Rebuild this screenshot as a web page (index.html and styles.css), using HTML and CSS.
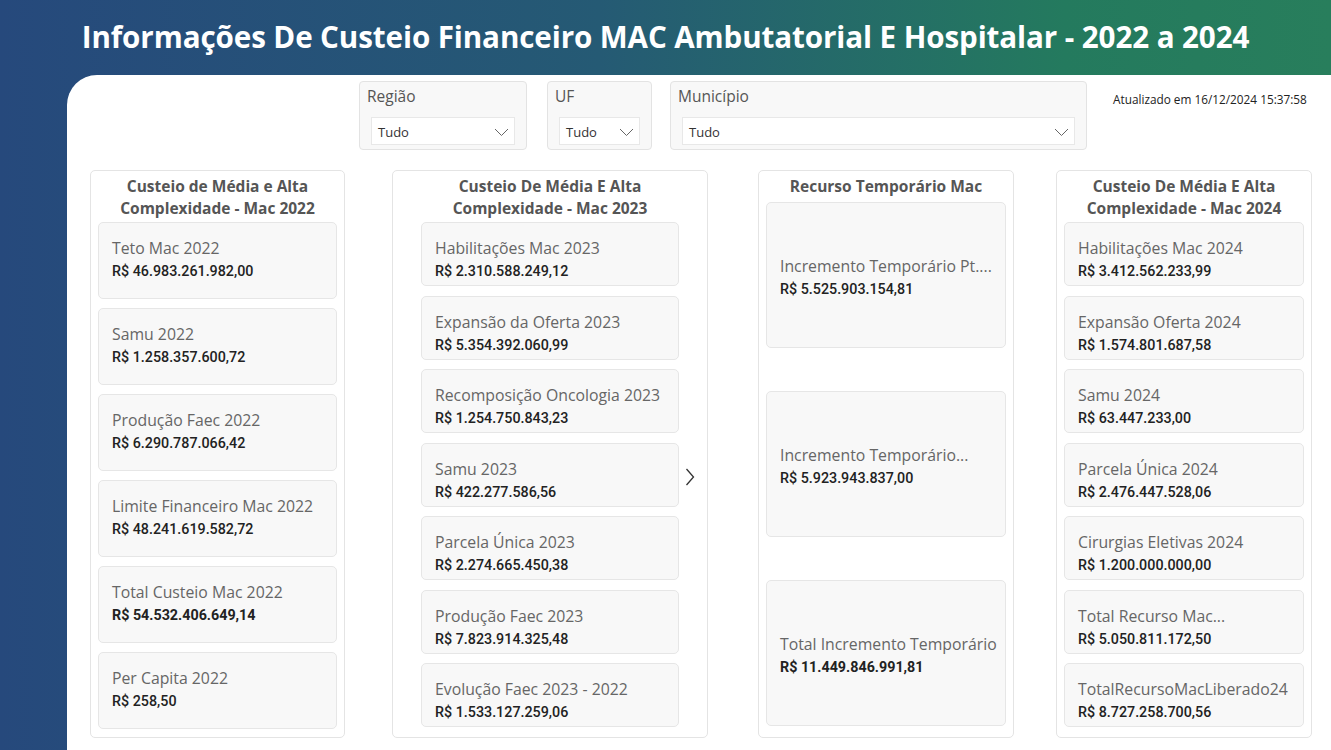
FILE: index.html
```html
<!DOCTYPE html>
<html lang="pt-BR">
<head>
  <meta charset="UTF-8">
  <title>Custeio Financeiro MAC</title>
  <link rel="stylesheet" href="styles.css">
</head>
<body>
  <header class="top">
    <h1>Informações De Custeio Financeiro MAC Ambutatorial E Hospitalar - 2022 a 2024</h1>
  </header>
  <main class="panel">
    <div class="filters">
      <div class="slicer regiao">
        <span class="slicer-title">Região</span>
        <div class="dropdown">Tudo
          <svg width="15" height="9" viewBox="0 0 15 9"><path d="M1 1l6.5 6.5L14 1" fill="none" stroke="#666" stroke-width="1"/></svg>
        </div>
      </div>
      <div class="slicer uf">
        <span class="slicer-title">UF</span>
        <div class="dropdown">Tudo
          <svg width="15" height="9" viewBox="0 0 15 9"><path d="M1 1l6.5 6.5L14 1" fill="none" stroke="#666" stroke-width="1"/></svg>
        </div>
      </div>
      <div class="slicer municipio">
        <span class="slicer-title">Município</span>
        <div class="dropdown">Tudo
          <svg width="15" height="9" viewBox="0 0 15 9"><path d="M1 1l6.5 6.5L14 1" fill="none" stroke="#666" stroke-width="1"/></svg>
        </div>
      </div>
      <div class="updated">Atualizado em 16/12/2024 15:37:58</div>
    </div>

    <div class="columns">
      <section class="col col-2022">
        <h2>Custeio de Média e Alta<br>Complexidade - Mac 2022</h2>
        <div class="card"><span class="label">Teto Mac 2022</span><span class="value">R$ 46.983.261.982,00</span></div>
        <div class="card"><span class="label">Samu 2022</span><span class="value">R$ 1.258.357.600,72</span></div>
        <div class="card"><span class="label">Produção Faec 2022</span><span class="value">R$ 6.290.787.066,42</span></div>
        <div class="card"><span class="label">Limite Financeiro Mac 2022</span><span class="value">R$ 48.241.619.582,72</span></div>
        <div class="card"><span class="label">Total Custeio Mac 2022</span><span class="value strong">R$ 54.532.406.649,14</span></div>
        <div class="card"><span class="label">Per Capita 2022</span><span class="value">R$ 258,50</span></div>
      </section>

      <section class="col col-2023">
        <h2>Custeio De Média E Alta<br>Complexidade - Mac 2023</h2>
        <div class="card"><span class="label">Habilitações Mac 2023</span><span class="value">R$ 2.310.588.249,12</span></div>
        <div class="card"><span class="label">Expansão da Oferta 2023</span><span class="value">R$ 5.354.392.060,99</span></div>
        <div class="card"><span class="label">Recomposição Oncologia 2023</span><span class="value">R$ 1.254.750.843,23</span></div>
        <div class="card"><span class="label">Samu 2023</span><span class="value">R$ 422.277.586,56</span></div>
        <div class="card"><span class="label">Parcela Única 2023</span><span class="value">R$ 2.274.665.450,38</span></div>
        <div class="card"><span class="label">Produção Faec 2023</span><span class="value">R$ 7.823.914.325,48</span></div>
        <div class="card"><span class="label">Evolução Faec 2023 - 2022</span><span class="value">R$ 1.533.127.259,06</span></div>
        <svg class="next" width="10" height="18" viewBox="0 0 10 18"><path d="M1.5 1l7 8-7 8" fill="none" stroke="#333" stroke-width="1.3"/></svg>
      </section>

      <section class="col col-temp">
        <h2>Recurso Temporário Mac</h2>
        <div class="card"><span class="label">Incremento Temporário Pt....</span><span class="value">R$ 5.525.903.154,81</span></div>
        <div class="card"><span class="label">Incremento Temporário...</span><span class="value">R$ 5.923.943.837,00</span></div>
        <div class="card"><span class="label">Total Incremento Temporário</span><span class="value strong">R$ 11.449.846.991,81</span></div>
      </section>

      <section class="col col-2024">
        <h2>Custeio De Média E Alta<br>Complexidade - Mac 2024</h2>
        <div class="card"><span class="label">Habilitações Mac 2024</span><span class="value">R$ 3.412.562.233,99</span></div>
        <div class="card"><span class="label">Expansão Oferta 2024</span><span class="value">R$ 1.574.801.687,58</span></div>
        <div class="card"><span class="label">Samu 2024</span><span class="value">R$ 63.447.233,00</span></div>
        <div class="card"><span class="label">Parcela Única 2024</span><span class="value">R$ 2.476.447.528,06</span></div>
        <div class="card"><span class="label">Cirurgias Eletivas 2024</span><span class="value">R$ 1.200.000.000,00</span></div>
        <div class="card"><span class="label">Total Recurso Mac...</span><span class="value">R$ 5.050.811.172,50</span></div>
        <div class="card"><span class="label">TotalRecursoMacLiberado24</span><span class="value">R$ 8.727.258.700,56</span></div>
      </section>
    </div>
  </main>
</body>
</html>
```

FILE: styles.css
```css
body {
  margin: 0;
  padding: 0;
  height: 750px;
  overflow: hidden;
  font-family: "Open Sans", "Noto Sans", sans-serif;
  background: linear-gradient(90deg, #26497c 0%, #255a74 45%, #247a5e 80%, #287e5c 100%);
}
.top {
  height: 75px;
  display: flex;
  align-items: center;
  justify-content: center;
}
.top h1 {
  margin: 0;
  padding-bottom: 2px;
  color: white;
  font-size: 29.6px;
  font-weight: 700;
  letter-spacing: -0.1px;
}
.panel {
  margin-left: 67px;
  height: 675px;
  background: white;
  border-top-left-radius: 30px;
}

/* filtros */
.filters {
  display: flex;
  align-items: flex-start;
  padding: 6px 0 0 292px;
}
.slicer {
  height: 69px;
  box-sizing: border-box;
  border: 1px solid #e3e3e3;
  border-radius: 4px;
  background: #f8f8f8;
  padding: 3px 11px 0 11px;
}
.regiao { width: 168px; }
.uf { width: 105px; margin-left: 20px; }
.municipio { width: 417px; margin-left: 18px; }
.slicer-title {
  display: block;
  margin-left: -4px;
  font-size: 15.5px;
  color: #555;
  height: 32px;
}
.dropdown {
  height: 28px;
  box-sizing: border-box;
  background: white;
  border: 1px solid #e8e8e8;
  display: flex;
  align-items: center;
  justify-content: space-between;
  padding: 2px 5px 0 6px;
  font-size: 13px;
  color: #333;
}
.updated {
  margin: 10px 0 0 26px;
  font-size: 11.8px;
  color: #222;
}

/* colunas */
.columns {
  display: flex;
  align-items: flex-start;
  padding: 20px 0 0 23px;
}
.col {
  position: relative;
  height: 568px;
  box-sizing: border-box;
  border: 1px solid #e4e4e4;
  border-radius: 5px;
  display: flex;
  flex-direction: column;
}
.col h2 {
  margin: 0;
  text-align: center;
  font-size: 15.5px;
  line-height: 22px;
  font-weight: 700;
  color: #555;
}
.col-2022 { width: 255px; padding: 4px 7px 0; }
.col-2023 { width: 316px; padding: 4px 28px 0; margin-left: 47px; }
.col-temp { width: 256px; padding: 4px 7px 0; margin-left: 50px; }
.col-2024 { width: 256px; padding: 4px 7px 0; margin-left: 42px; }

.card {
  flex-shrink: 0;
  box-sizing: border-box;
  background: #f8f8f8;
  border: 1px solid #e6e6e6;
  border-radius: 5px;
  padding: 14px 0 0 13px;
  display: flex;
  flex-direction: column;
  white-space: nowrap;
}
.col-2022 h2 { margin-bottom: 3px; }
.col-2022 .card { height: 77px; margin-bottom: 9px; }
.col-2023 h2, .col-2024 h2 { margin-bottom: 3px; }
.col-2023 .card, .col-2024 .card { height: 64px; margin-bottom: 9.5px; }
.col-temp h2 { margin-bottom: 5px; }
.col-temp .card {
  height: 146px;
  margin-bottom: 43px;
  justify-content: center;
  padding: 4px 0 0 13px;
}
.label {
  font-size: 15.8px;
  color: #666;
  line-height: 23px;
}
.value {
  margin-top: 1px;
  font-family: Roboto, "Liberation Sans", sans-serif;
  font-size: 14.3px;
  font-weight: 500;
  color: #222;
  line-height: 21px;
}
.value.strong { font-weight: 700; }
.next {
  position: absolute;
  left: 292px;
  top: 297px;
}
```
